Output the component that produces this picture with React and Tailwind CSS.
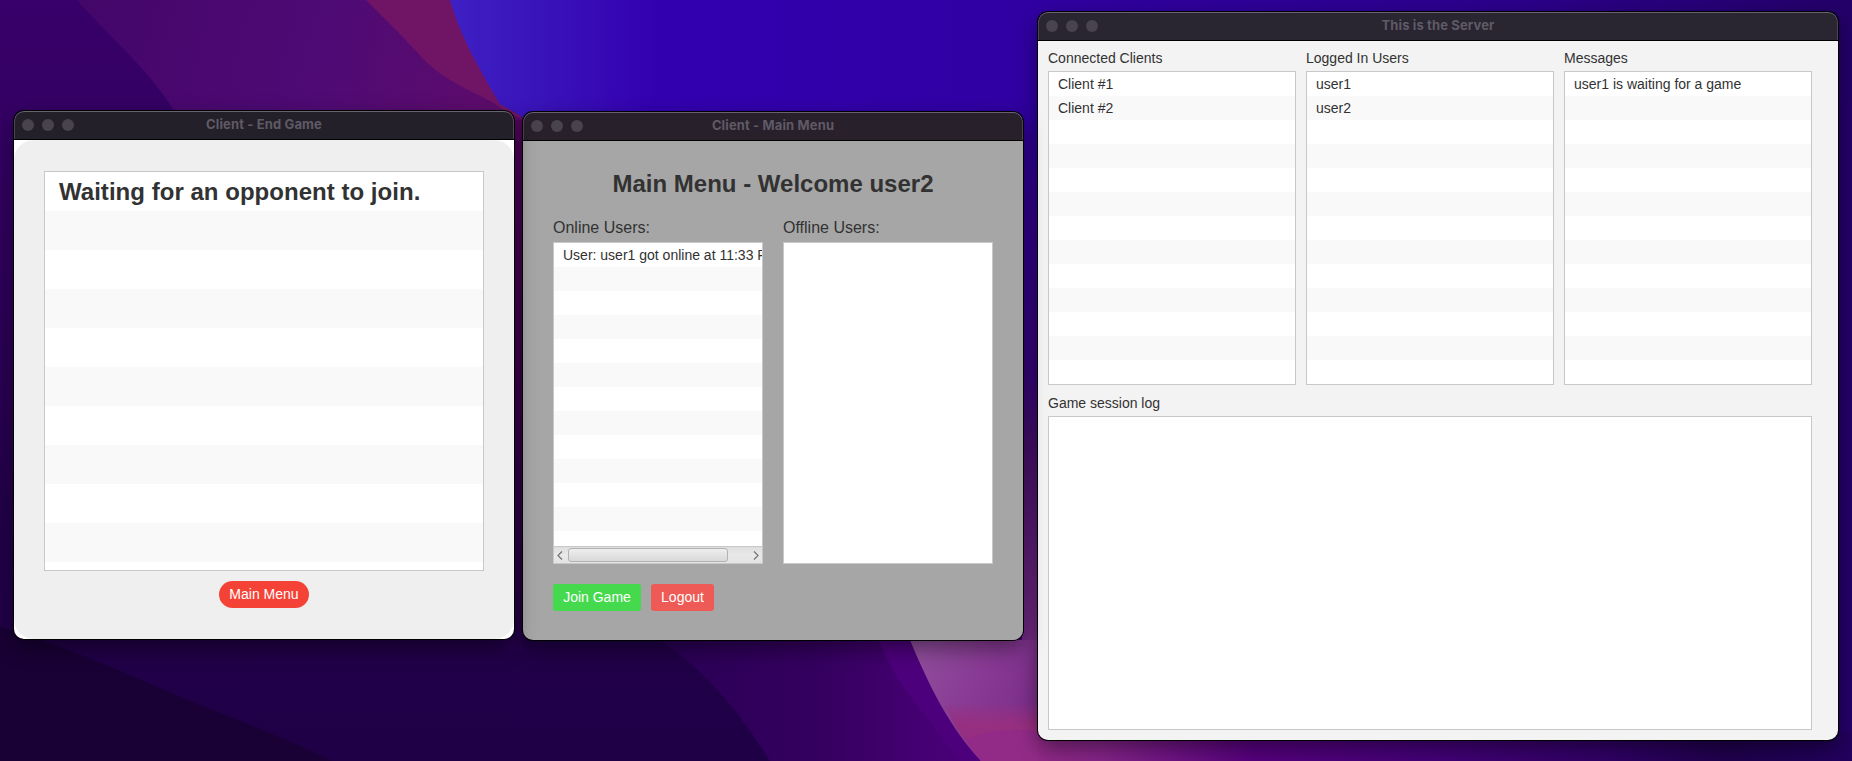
import React from "react";

function Wallpaper() {
  return (
    <svg className="absolute inset-0 h-full w-full" viewBox="0 0 1852 761" preserveAspectRatio="none" aria-hidden="true">
      <defs>
        <linearGradient id="base" x1="0" y1="0" x2="0" y2="1">
          <stop offset="0" stopColor="#38006a" />
          <stop offset="0.3" stopColor="#30005e" />
          <stop offset="0.7" stopColor="#220048" />
          <stop offset="1" stopColor="#1f0047" />
        </linearGradient>
        <linearGradient id="plum" gradientUnits="userSpaceOnUse" x1="80" y1="0" x2="480" y2="110">
          <stop offset="0" stopColor="#430669" />
          <stop offset="0.6" stopColor="#4f0a75" />
          <stop offset="1" stopColor="#5c0c6c" />
        </linearGradient>
        <linearGradient id="plumFade" x1="0" y1="0" x2="0" y2="1">
          <stop offset="0" stopColor="#560560" />
          <stop offset="0.45" stopColor="#450055" />
          <stop offset="1" stopColor="#24004c" />
        </linearGradient>
        <linearGradient id="blue" gradientUnits="userSpaceOnUse" x1="450" y1="60" x2="1852" y2="60">
          <stop offset="0" stopColor="#3d20c4" />
          <stop offset="0.06" stopColor="#3a14bb" />
          <stop offset="0.15" stopColor="#3300b0" />
          <stop offset="0.42" stopColor="#3000a2" />
          <stop offset="0.75" stopColor="#2b008c" />
          <stop offset="1" stopColor="#230069" />
        </linearGradient>
        <linearGradient id="gap" x1="0" y1="0" x2="0" y2="1">
          <stop offset="0" stopColor="#30009e" />
          <stop offset="0.5" stopColor="#39067c" />
          <stop offset="0.62" stopColor="#49106d" />
          <stop offset="1" stopColor="#7b2e8b" />
        </linearGradient>
        <linearGradient id="violet" gradientUnits="userSpaceOnUse" x1="680" y1="0" x2="950" y2="0">
          <stop offset="0" stopColor="#2b0056" />
          <stop offset="0.5" stopColor="#34005f" />
          <stop offset="1" stopColor="#490077" />
        </linearGradient>
        <linearGradient id="pink" gradientUnits="userSpaceOnUse" x1="920" y1="650" x2="1040" y2="700">
          <stop offset="0" stopColor="#8f4d9b" />
          <stop offset="0.5" stopColor="#883a94" />
          <stop offset="1" stopColor="#7b2e8b" />
        </linearGradient>
        <linearGradient id="rose" x1="0" y1="0" x2="0" y2="1">
          <stop offset="0" stopColor="#972f80" stopOpacity="0.2" />
          <stop offset="0.35" stopColor="#972f80" />
          <stop offset="1" stopColor="#972f80" />
        </linearGradient>
        <linearGradient id="floor" gradientUnits="userSpaceOnUse" x1="1000" y1="0" x2="1852" y2="0">
          <stop offset="0" stopColor="#972d85" />
          <stop offset="0.12" stopColor="#86248a" />
          <stop offset="0.3" stopColor="#570080" />
          <stop offset="0.5" stopColor="#45007a" />
          <stop offset="0.72" stopColor="#300066" />
          <stop offset="0.85" stopColor="#20004e" />
          <stop offset="1" stopColor="#22005f" />
        </linearGradient>
      </defs>
      <rect width="1852" height="761" fill="url(#base)" />
      <path d="M77 0C108 36 148 68 175 112L200 180H540V0Z" fill="url(#plum)" />
      <path d="M366 0C392 26 404 38 417 52C430 68 448 80 470 91C485 98 495 103 512 116L540 120V0Z" fill="#701566" />
      <path d="M450 0C460 34 475 62 500 104Q511 110 524 118L560 130L1852 124V0Z" fill="url(#blue)" />
      <rect x="505" y="120" width="18" height="532" fill="url(#plumFade)" />
      <rect x="1000" y="120" width="60" height="530" fill="url(#gap)" />
      <rect x="1800" y="100" width="52" height="661" fill="#24006a" />
      <path d="M0 627C80 650 150 685 200 705S290 740 332 761H0Z" fill="#190035" />
      <path d="M660 640C710 674 745 720 770 761H1022V630H640Z" fill="url(#violet)" />
      <path d="M879 640C893 681 930 720 960 761H985L916 640Z" fill="#4d007c" />
      <path d="M910 640C930 688 950 728 981 761H1060V640Z" fill="url(#pink)" />
      <path d="M944 705H1060V761H981Q962 740 944 705Z" fill="url(#rose)" />
      <path d="M965 739Q1000 725 1040 732V761H981Z" fill="#922b88" />
      <path d="M1038 732H1852V761H1038Z" fill="url(#floor)" />
    </svg>
  );
}

function AppWindow({ title, frame, bar, body, children }) {
  return (
    <section className={`absolute flex flex-col overflow-hidden rounded-[10px] shadow-[0_0_0_1px_#000,0_8px_22px_rgba(0,0,0,0.45)] ${frame}`}>
      <header
        className={`relative flex h-[29px] shrink-0 items-center rounded-t-[10px] border-b border-black pl-2 shadow-[inset_0_1px_0_#68636c,inset_1px_0_0_#4a4650,inset_-1px_0_0_#4a4650] ${bar}`}
      >
        <div className="flex gap-2">
          <span className="size-3 rounded-full bg-[#48434f]" />
          <span className="size-3 rounded-full bg-[#48434f]" />
          <span className="size-3 rounded-full bg-[#48434f]" />
        </div>
        <h1 className="absolute inset-x-0 top-[5px] text-center font-['Inter'] text-[13px] leading-4 font-bold tracking-[0.13px] text-[#5f5a66]">
          {title}
        </h1>
      </header>
      <div className={`min-h-0 flex-1 ${body}`}>{children}</div>
    </section>
  );
}

function StripedList({ items, rows, rowClass, className, footer }) {
  return (
    <div className={`flex flex-col overflow-hidden border border-[#c8c8c8] bg-white ${className}`}>
      <ul className="min-h-0 flex-1 overflow-hidden">
        {Array.from({ length: rows }, (_, i) => (
          <li key={i} className={`flex items-center overflow-hidden whitespace-nowrap even:bg-[#f9f9f9] ${rowClass}`}>
            {items[i]}
          </li>
        ))}
      </ul>
      {footer}
    </div>
  );
}

function HorizontalScrollbar() {
  return (
    <div className="flex h-[17px] shrink-0 items-center border-t border-[#c8c8c8] bg-linear-to-b from-[#dedede] via-[#e9e9e9] to-[#e3e3e3] px-[3px]">
      <svg width="6" height="9" viewBox="0 0 6 9" fill="none" stroke="#777" strokeWidth="1.3">
        <path d="M5 0.5L1 4.5L5 8.5" />
      </svg>
      <div className="ml-[5px] h-[14px] w-[160px] rounded-[3px] border border-[#b2b2b2] bg-linear-to-b from-[#eeeeee] to-[#d9d9d9]" />
      <svg className="ml-auto" width="6" height="9" viewBox="0 0 6 9" fill="none" stroke="#777" strokeWidth="1.3">
        <path d="M1 0.5L5 4.5L1 8.5" />
      </svg>
    </div>
  );
}

function EndGameWindow() {
  return (
    <AppWindow title="Client - End Game" frame="left-[14px] top-[111px] h-[528px] w-[500px]" bar="bg-[#242029]" body="bg-white">
      <div className="flex h-full flex-col items-center rounded-[20px] bg-[#efefef] pt-[31px]">
        <StripedList
          items={["Waiting for an opponent to join."]}
          rows={11}
          rowClass="h-[39px] pl-[14px] text-2xl font-bold tracking-[0.03px]"
          className="h-[400px] w-[440px] shrink-0"
        />
        <button className="mt-[10px] h-[27px] w-[90px] rounded-full bg-[#f44336] text-[14px] leading-[27px] text-white">Main Menu</button>
      </div>
    </AppWindow>
  );
}

function MainMenuWindow() {
  return (
    <AppWindow title="Client - Main Menu" frame="left-[523px] top-[112px] h-[528px] w-[500px]" bar="bg-[#28212c]" body="bg-[#a6a6a6] px-[30px] pt-[25px]">
      <h2 className="h-[35px] text-center text-2xl leading-[35px] font-bold">Main Menu - Welcome user2</h2>
      <div className="mt-[17px] flex gap-5 text-base leading-[19px]">
        <div className="flex w-[210px] flex-col gap-[5px]">
          <span>Online Users:</span>
          <StripedList
            items={["User: user1 got online at 11:33 PM"]}
            rows={13}
            rowClass="h-6 pl-[9px] text-[14px]"
            className="h-[322px]"
            footer={<HorizontalScrollbar />}
          />
        </div>
        <div className="flex w-[210px] flex-col gap-[5px]">
          <span>Offline Users:</span>
          <div className="h-[322px] border border-[#c8c8c8] bg-white" />
        </div>
      </div>
      <div className="mt-[20px] flex gap-[10px] text-[14px] leading-[27px] text-white">
        <button className="h-[27px] w-[88px] rounded-[3px] bg-[#45d94e]">Join Game</button>
        <button className="h-[27px] w-[63px] rounded-[3px] bg-[#ee5a55]">Logout</button>
      </div>
    </AppWindow>
  );
}

const serverLists = [
  { label: "Connected Clients", items: ["Client #1", "Client #2"] },
  { label: "Logged In Users", items: ["user1", "user2"] },
  { label: "Messages", items: ["user1 is waiting for a game"] },
];

function ServerWindow() {
  return (
    <AppWindow title="This is the Server" frame="left-[1038px] top-[12px] h-[728px] w-[800px]" bar="bg-[#292531]" body="bg-[#f3f3f3] pt-[10px] pl-[10px] text-[14px] leading-[15px]">
      <div className="flex gap-[10px]">
        {serverLists.map(({ label, items }) => (
          <div key={label} className="flex w-[248px] flex-col gap-[5px]">
            <span>{label}</span>
            <StripedList items={items} rows={13} rowClass="h-6 pl-[9px]" className="h-[314px]" />
          </div>
        ))}
      </div>
      <div className="mt-[11px] flex w-[764px] flex-col gap-[5px]">
        <span>Game session log</span>
        <div className="h-[314px] border border-[#c8c8c8] bg-white" />
      </div>
    </AppWindow>
  );
}

export default function App() {
  return (
    <main className="relative h-[761px] w-[1852px] overflow-hidden bg-[#24004c] font-['Liberation_Sans',Arial,sans-serif] text-[#323232]">
      <Wallpaper />
      <ServerWindow />
      <MainMenuWindow />
      <EndGameWindow />
    </main>
  );
}
